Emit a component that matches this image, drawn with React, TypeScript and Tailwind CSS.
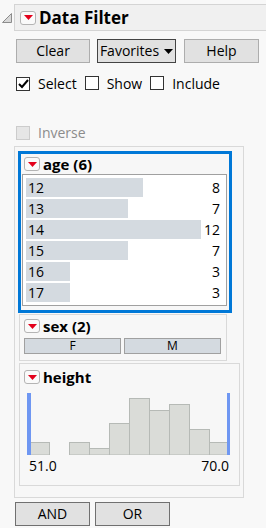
import React from 'react';

const RedBtn: React.FC = () => (
  <span className="inline-flex items-center justify-center w-[16px] h-[14px] border border-[#b4b4b4] rounded-[3px] bg-[#fafafa] shrink-0">
    <svg width="9" height="5" viewBox="0 0 9 5">
      <path d="M0 0h9L4.5 5z" fill="#e3001b" />
    </svg>
  </span>
);

const CheckBox: React.FC<{ checked?: boolean; disabled?: boolean }> = ({ checked, disabled }) => (
  <span
    className={`inline-flex items-center justify-center w-[14px] h-[14px] border shrink-0 ${
      disabled ? 'border-[#cccccc] bg-[#e6e6e6]' : 'border-[#333333] bg-white'
    }`}
  >
    {checked && (
      <svg width="11" height="10" viewBox="0 0 11 10">
        <path d="M1 5l3 3 6-7" fill="none" stroke="#000" strokeWidth="2" />
      </svg>
    )}
  </span>
);

const ages = [
  { v: '12', n: 8 },
  { v: '13', n: 7 },
  { v: '14', n: 12 },
  { v: '15', n: 7 },
  { v: '16', n: 3 },
  { v: '17', n: 3 },
];

// histogram bin tops (svg coords), baseline at 62
const bins = [49, null, 49, 55, 30, 5, 17, 11, 36, 49];

const App: React.FC = () => {
  return (
    <div className="w-[266px] h-[528px] bg-[#f8f8f8] font-['Open_Sans',sans-serif] text-[13px] text-black overflow-hidden">
      {/* title */}
      <div className="flex items-center pt-[4px]">
        <svg className="ml-[2px]" width="10" height="10" viewBox="0 0 10 10">
          <path d="M9.5 0.5V9.5H0.5z" fill="#d8d8d8" stroke="#8c8c8c" strokeWidth="1" />
        </svg>
        <div className="ml-[2px] flex-1 h-[27px] border border-r-0 border-[#d4d4d4] bg-[#f0f0f0] flex items-center pl-[5px] gap-[3px]">
          <RedBtn />
          <span className="font-bold text-[17px] leading-none">Data Filter</span>
        </div>
      </div>

      {/* buttons */}
      <div className="flex pl-[16px] mt-[8px]">
        <button className="w-[74px] h-[24px] bg-[#e1e1e1] border border-[#adadad] text-[14px] leading-none">Clear</button>
        <button className="ml-[7px] w-[79px] h-[24px] bg-[#e1e1e1] border border-[#444444] text-[14px] leading-none flex items-center justify-center gap-[5px]">
          Favorites
          <svg width="9" height="5" viewBox="0 0 9 5"><path d="M0 0h9L4.5 5z" fill="#000" /></svg>
        </button>
        <button className="ml-[8px] w-[75px] h-[24px] bg-[#e1e1e1] border border-[#adadad] text-[14px] leading-none">Help</button>
      </div>

      {/* modes */}
      <div className="flex items-center pl-[16px] mt-[13px] text-[14px] leading-none">
        <CheckBox checked />
        <span className="ml-[8px]">Select</span>
        <span className="ml-[8px]"><CheckBox /></span>
        <span className="ml-[8px]">Show</span>
        <span className="ml-[8px]"><CheckBox /></span>
        <span className="ml-[8px]">Include</span>
      </div>

      <div className="flex items-center pl-[16px] mt-[34px] text-[14px] leading-none text-[#8c8c8c]">
        <CheckBox disabled />
        <span className="ml-[8px]">Inverse</span>
      </div>

      {/* filter panel */}
      <div className="ml-[14px] mt-[6px] w-[230px] h-[352px] border border-[#d9d9d9] bg-[#f7f7f7] pt-[4px] pl-[3px]">
        {/* age */}
        <div className="w-[214px] h-[162px] border-[3px] border-[#0078d7] pl-[1px] pt-[2px] flex flex-col">
          <div className="flex items-center gap-[3px] pl-[2px] h-[16px]">
            <RedBtn />
            <span className="font-bold text-[15px] leading-none">age (6)</span>
          </div>
          <div className="mt-[2px] w-[205px] h-[132px] border border-[#a0a0a0] bg-white pt-[3px] pl-[3px] pr-[6px] flex flex-col gap-[2px]">
            {ages.map((a) => (
              <div key={a.v} className="relative h-[19px] flex items-center">
                <div className="absolute left-0 top-0 h-[19px] bg-[#d4dae0]" style={{ width: Math.round(a.n * 14.6) }} />
                <span className="relative pl-[2px] text-[14px] leading-none">{a.v}</span>
                <span className="relative ml-auto text-[14px] leading-none">{a.n}</span>
              </div>
            ))}
          </div>
        </div>

        {/* sex */}
        <div className="ml-[1px] mt-[1px] w-[208px] h-[47px] border border-[#d9d9d9] pl-[4px] pt-[3px]">
          <div className="flex items-center gap-[3px] h-[16px]">
            <RedBtn />
            <span className="font-bold text-[15px] leading-none">sex (2)</span>
          </div>
          <div className="flex gap-[3px] mt-[4px]">
            <div className="w-[97px] h-[16px] bg-[#d4dae0] border border-[#a0a0a0] flex items-center justify-center text-[12px] leading-none">F</div>
            <div className="w-[97px] h-[16px] bg-[#d4dae0] border border-[#a0a0a0] flex items-center justify-center text-[12px] leading-none">M</div>
          </div>
        </div>

        {/* height */}
        <div className="ml-[1px] mt-[2px] w-[221px] h-[123px] border border-[#d9d9d9] pl-[4px] pt-[5px]">
          <div className="flex items-center gap-[3px] h-[16px]">
            <RedBtn />
            <span className="font-bold text-[15px] leading-none">height</span>
          </div>
          <svg className="mt-[8px] -ml-[4px] block" width="219" height="62" viewBox="0 0 219 62">
            {bins.map((t, i) =>
              t === null ? null : (
                <rect key={i} x={9.5 + i * 20} y={t + 0.5} width={20} height={61.5 - t} fill="#dadcd8" stroke="#b6bab6" strokeWidth="1" />
              )
            )}
            <rect x="7" y="0" width="4" height="62" fill="#6f97f2" />
            <rect x="207" y="0" width="3" height="62" fill="#6f97f2" />
          </svg>
          <div className="flex justify-between pl-[5px] pr-[10px] mt-[4px] text-[14px] leading-none">
            <span>51.0</span>
            <span>70.0</span>
          </div>
        </div>
      </div>

      {/* and / or */}
      <div className="flex pl-[15px] mt-[4px]">
        <button className="w-[75px] h-[24px] bg-[#e1e1e1] border border-[#707070] text-[14px] leading-none">AND</button>
        <button className="ml-[5px] w-[75px] h-[24px] bg-[#e1e1e1] border border-[#707070] text-[14px] leading-none">OR</button>
      </div>
    </div>
  );
};

export default App;
